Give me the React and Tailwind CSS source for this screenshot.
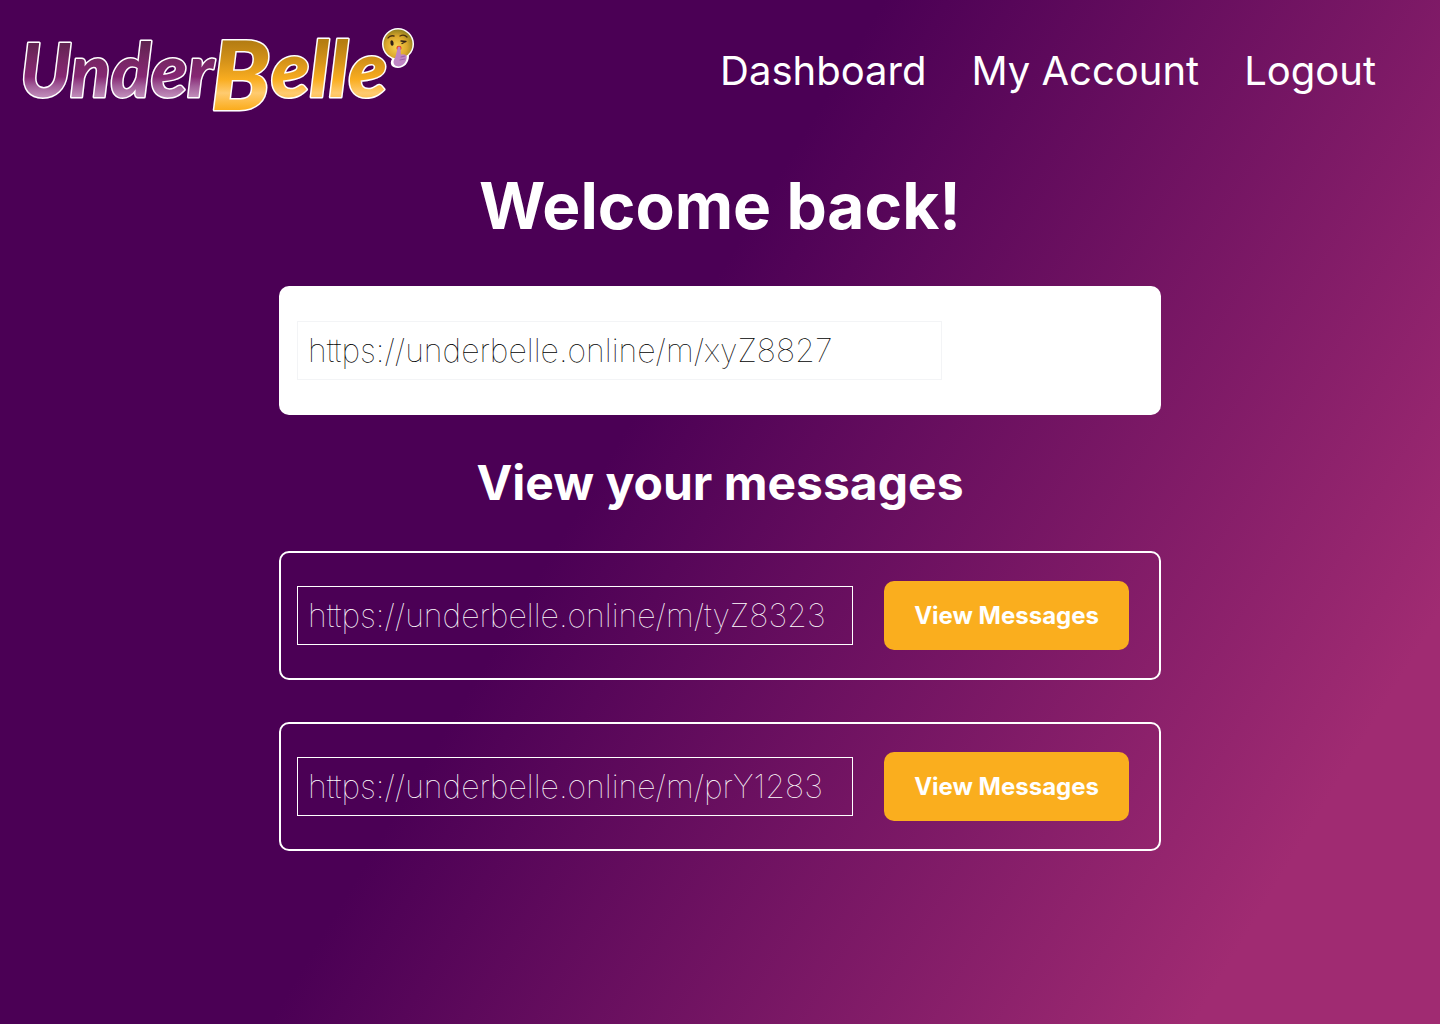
const messages = [
  { id: "tyZ8323", url: "https://underbelle.online/m/tyZ8323" },
  { id: "prY1283", url: "https://underbelle.online/m/prY1283" },
];

function Logo() {
  return (
    <svg viewBox="0 -14 396 122" className="h-[122px] w-[396px] max-w-full" role="img" aria-label="UnderBelle">
      <defs>
        <linearGradient id="plum" gradientUnits="userSpaceOnUse" x1="0" y1="18" x2="0" y2="74">
          <stop offset="0" stopColor="#5f2350" />
          <stop offset="0.3" stopColor="#762663" />
          <stop offset="0.62" stopColor="#862773" />
          <stop offset="0.78" stopColor="#a15c98" />
          <stop offset="1" stopColor="#c391bd" />
        </linearGradient>
        <linearGradient id="gold" gradientUnits="userSpaceOnUse" x1="0" y1="18" x2="0" y2="86">
          <stop offset="0" stopColor="#b57d12" />
          <stop offset="0.3" stopColor="#d7941a" />
          <stop offset="0.55" stopColor="#f9ad20" />
          <stop offset="0.75" stopColor="#ffcb70" />
          <stop offset="1" stopColor="#fbac1c" />
        </linearGradient>
        <radialGradient id="face" cx="0.45" cy="0.6" r="0.6">
          <stop offset="0" stopColor="#f7d452" />
          <stop offset="0.6" stopColor="#dda82c" />
          <stop offset="1" stopColor="#93801f" />
        </radialGradient>
      </defs>
      <g
        fontFamily="Lato, sans-serif"
        fontStyle="italic"
        fontWeight="900"
        stroke="#fff"
        strokeWidth="3"
        strokeLinejoin="round"
        paintOrder="stroke"
      >
        <text x="0" y="73" fontSize="74" fill="url(#plum)">Under</text>
        <text x="191" y="86" fontSize="96" fill="url(#gold)">B</text>
        <text x="251" y="73" fontSize="79" fill="url(#gold)">elle</text>
      </g>
      <g>
        <circle cx="378" cy="20" r="16" fill="#fff" />
        <path d="M368 30l4 5c-3 5 0 9 6 9s11-5 11-12l-4-6z" fill="#fff" />
        <circle cx="378" cy="20" r="14.500" fill="url(#face)" />
        <ellipse cx="372" cy="19" rx="1.600" ry="2.800" fill="#302018" transform="rotate(-8 372 19)" />
        <path d="M368 14q2-3 6-2M380 12q4-2 7 1" fill="none" stroke="#4a3010" strokeWidth="1.300" strokeLinecap="round" />
        <path d="M381 17l5 .5-4 2" fill="none" stroke="#302018" strokeWidth="1.300" strokeLinecap="round" strokeLinejoin="round" />
        <ellipse cx="379" cy="24" rx="2.600" ry="2.200" fill="#e8441c" />
        <path
          d="M377.500 24.500q0-2 1.500-2t1.600 2l.2 6q5-1 6 2c0 5-3 9-8 10-4 0-6-3-5-6l2-5z"
          fill="#bf86c4"
        />
        <path d="M381 33l4-1M380 36l5-1" fill="none" stroke="#9a5fa8" strokeWidth="1" strokeLinecap="round" />
      </g>
    </svg>
  );
}

function MessageRow({ id, url }) {
  return (
    <li className="flex h-[129px] items-center justify-between gap-[31px] rounded-[10px] border-2 border-white pr-[30px] pl-4">
      <input
        aria-label={`Link ${id}`}
        readOnly
        defaultValue={url}
        className="h-[59px] min-w-0 flex-1 border border-white bg-transparent px-[10px] text-[32px] font-thin text-white outline-none"
      />
      <button type="button" className="h-[69px] shrink-0 rounded-[10px] bg-[#faae1e] px-[30px] text-2xl font-bold text-white">
        View Messages
      </button>
    </li>
  );
}

export default function App() {
  return (
    <div className="min-h-screen bg-[linear-gradient(121deg,#4b0055_0%,#4b0055_43%,#a02b72_88%)] pb-16 font-['Inter',sans-serif] text-white">
      <header className="flex flex-wrap items-center justify-between pt-[10px] pr-16 pl-5">
        <a href="#home">
          <Logo />
        </a>
        <nav className="flex gap-[45px] text-[40px] leading-12">
          <a href="#dashboard">Dashboard</a>
          <a href="#account">My Account</a>
          <a href="#logout">Logout</a>
        </nav>
      </header>
      <main className="mx-auto flex max-w-[882px] flex-col">
        <h1 className="mt-[35px] text-center text-[64px] leading-[78px] font-bold">Welcome back!</h1>
        <section className="mt-[41px] flex h-[129px] items-center rounded-[10px] bg-white px-[18px]">
          <input
            aria-label="Your link"
            readOnly
            defaultValue="https://underbelle.online/m/xyZ8827"
            className="h-[59px] w-[645px] max-w-full border border-gray-100 bg-white px-[10px] text-[32px] font-thin text-black outline-none"
          />
        </section>
        <h2 className="mt-[39px] text-center text-5xl leading-[58px] font-bold">View your messages</h2>
        <ul className="mt-[39px] flex flex-col gap-[42px]">
          {messages.map((message) => (
            <MessageRow key={message.id} {...message} />
          ))}
        </ul>
      </main>
    </div>
  );
}
